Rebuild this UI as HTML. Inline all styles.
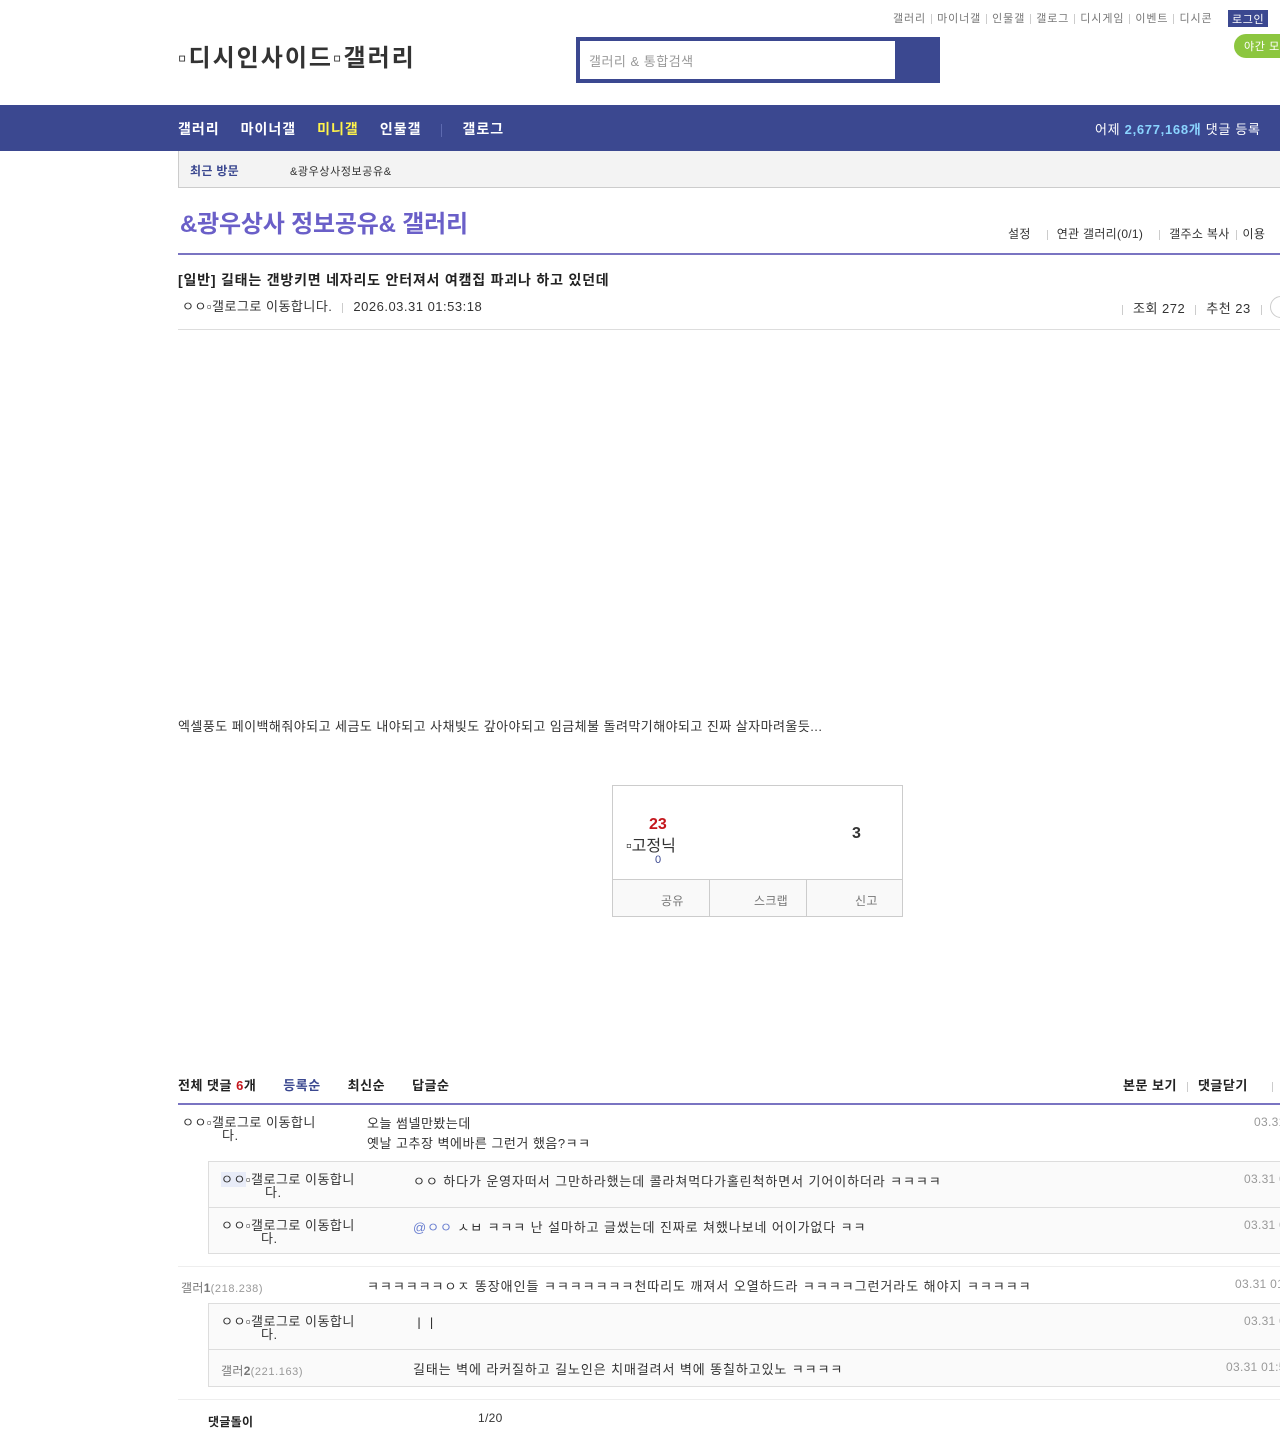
<!DOCTYPE html>
<html><head><meta charset="utf-8"><style>
*{margin:0;padding:0;box-sizing:border-box}
body{width:1280px;height:1428px;overflow:hidden;background:#fff;font-family:"Liberation Sans","Noto Sans CJK KR",sans-serif;color:#333;position:relative}
.a{position:absolute;white-space:nowrap}
.s11{font-size:11px;letter-spacing:0.6px}.s12{font-size:12px;letter-spacing:0.3px}.s13{font-size:13px;letter-spacing:0.5px}
.b{font-weight:bold}
.g{color:#777}
.sep{display:inline-block;width:1px;height:10px;background:#ccc;margin:0 5px;vertical-align:middle}
</style></head><body>
<div class="a s11 g" style="top:10px;left:893px;letter-spacing:0.9px">갤러리<span class="sep"></span>마이너갤<span class="sep"></span>인물갤<span class="sep"></span>갤로그<span class="sep"></span>디시게임<span class="sep"></span>이벤트<span class="sep"></span>디시콘</div>
<div class="a s11" style="top:10px;left:1228px;background:#3b4890;color:#fff;padding:1px 4px;height:17px">로그인</div>
<div class="a s11" style="top:34px;left:1234px;background:#8cc63f;color:#fff;padding:4px 10px;border-radius:12px 0 0 12px;width:60px">야간 모드</div>
<div class="a b" style="top:38px;left:178px;font-size:24px;color:#333;letter-spacing:2px">▫디시인사이드▫갤러리</div>
<div class="a" style="top:37px;left:576px;width:364px;height:46px;background:#3b4890"></div>
<div class="a s13" style="top:41px;left:580px;width:315px;height:38px;background:#fff;color:#999;padding:10px 9px">갤러리 &amp; 통합검색</div>
<div class="a" style="top:105px;left:0;width:1280px;height:46px;background:#3b4890"></div>
<div class="a b" style="top:119px;left:178px;font-size:14px;color:#fff;letter-spacing:1px">갤러리<span style="margin-left:21px">마이너갤</span><span style="margin-left:21px;color:#fff34a">미니갤</span><span style="margin-left:21px">인물갤</span><span style="display:inline-block;width:1px;height:13px;background:#5d6ab0;margin:0 20px;vertical-align:middle"></span>갤로그</div>
<div class="a s13" style="top:119px;left:1095px;color:#fff;letter-spacing:0.7px">어제 <b style="color:#8ad4ff">2,677,168개</b> 댓글 등록</div>
<div class="a" style="top:151px;left:178px;width:1102px;height:37px;background:#f3f3f3;border-left:1px solid #ccc;border-bottom:1px solid #ccc"></div>
<div class="a s12 b" style="top:162px;left:190px;color:#3b4890">최근 방문</div>
<div class="a s11" style="top:163px;left:290px;color:#333">&amp;광우상사정보공유&amp;</div>
<div class="a b" style="top:204px;left:180px;font-size:24px;color:#6a5fc8;letter-spacing:-0.2px">&amp;광우상사 정보공유&amp; 갤러리</div>
<div class="a s12" style="top:225px;left:1008px">설정<span class="sep" style="margin:0 9px 0 16px"></span>연관 갤러리(0/1)<span class="sep" style="margin:0 9px 0 16px"></span>갤주소 복사<span class="sep" style="margin:0 6px"></span>이용</div>
<div class="a" style="top:253px;left:178px;width:1102px;height:2px;background:#7a74c2"></div>
<div class="a b" style="top:270px;left:178px;font-size:14px;color:#222;letter-spacing:0.8px">[일반] 길태는 갠방키면 네자리도 안터져서 여캠집 파괴나 하고 있던데</div>
<div class="a s13" style="top:296px;left:182px">ㅇㅇ▫갤로그로 이동합니다.<span class="sep" style="margin:0 10px"></span>2026.03.31 01:53:18</div>
<div class="a s13" style="top:298px;left:1122px"><span class="sep" style="margin:0 10px 0 0"></span>조회 272<span class="sep" style="margin:0 10px"></span>추천 23<span class="sep" style="margin:0 10px"></span></div>
<div class="a" style="top:296px;left:1270px;width:22px;height:22px;border:1px solid #ccc;border-radius:50%"></div>
<div class="a" style="top:329px;left:178px;width:1102px;height:1px;background:#ddd"></div>
<div class="a s13" style="top:716px;left:178px;letter-spacing:0.45px">엑셀풍도 페이백해줘야되고 세금도 내야되고 사채빚도 갚아야되고 임금체불 돌려막기해야되고 진짜 살자마려울듯...</div>
<div class="a" style="top:785px;left:612px;width:291px;height:132px;border:1px solid #ccc"></div>
<div class="a b" style="top:816px;left:649px;font-size:16px;color:#c4161c">23</div>
<div class="a" style="top:832px;left:626px;font-size:16px;color:#333">▫고정닉</div>
<div class="a s11" style="top:854px;left:655px;color:#3b4890">0</div>
<div class="a b" style="top:825px;left:852px;font-size:16px;color:#333">3</div>
<div class="a" style="top:879px;left:613px;width:289px;height:37px;border-top:1px solid #ccc;background:#f9f9f9"></div>
<div class="a" style="top:880px;left:709px;width:1px;height:36px;background:#ccc"></div>
<div class="a" style="top:880px;left:806px;width:1px;height:36px;background:#ccc"></div>
<div class="a s12 g" style="top:892px;left:661px">공유</div>
<div class="a s12 g" style="top:892px;left:754px">스크랩</div>
<div class="a s12 g" style="top:892px;left:855px">신고</div>
<div class="a b s13" style="top:1075px;left:178px;color:#222">전체 댓글 <span style="color:#c4161c">6</span>개<span style="margin-left:27px;color:#3b4890">등록순</span><span style="margin-left:27px">최신순</span><span style="margin-left:27px">답글순</span></div>
<div class="a b s13" style="top:1075px;left:1123px;color:#222">본문 보기<span class="sep" style="margin:0 10px"></span>댓글닫기<span class="sep" style="margin:0 10px 0 24px"></span></div>
<div class="a" style="top:1103px;left:178px;width:1102px;height:2px;background:#7a74c2"></div>
<div class="a s13" style="top:1116px;left:182px;line-height:13px">ㅇㅇ▫갤로그로 이동합니<br><span style="padding-left:40px">다.</span></div>
<div class="a s13" style="top:1114px;left:367px;line-height:20px">오늘 썸넬만봤는데<br>옛날 고추장 벽에바른 그런거 했음?ㅋㅋ</div>
<div class="a s12 g" style="top:1115px;left:1254px;color:#999">03.31</div>
<div class="a" style="top:1161px;left:208px;width:1072px;height:93px;background:#fafafa;border:1px solid #ddd;border-right:none"></div>
<div class="a" style="top:1207px;left:208px;width:1072px;height:1px;background:#ddd"></div>
<div class="a s13" style="top:1173px;left:221px;line-height:13px"><span style="background:#e8ecf8">ㅇㅇ</span>▫갤로그로 이동합니<br><span style="padding-left:44px">다.</span></div>
<div class="a s13" style="top:1171px;left:413px;letter-spacing:0.9px">ㅇㅇ 하다가 운영자떠서 그만하라했는데 콜라쳐먹다가홀린척하면서 기어이하더라 ㅋㅋㅋㅋ</div>
<div class="a s12" style="top:1172px;left:1244px;color:#999">03.31 0</div>
<div class="a s13" style="top:1219px;left:221px;line-height:13px">ㅇㅇ▫갤로그로 이동합니<br><span style="padding-left:40px">다.</span></div>
<div class="a s13" style="top:1217px;left:413px;letter-spacing:0.9px"><span style="color:#6a7fd0">@ㅇㅇ</span> ㅅㅂ ㅋㅋㅋ 난 설마하고 글썼는데 진짜로 쳐했나보네 어이가없다 ㅋㅋ</div>
<div class="a s12" style="top:1218px;left:1244px;color:#999">03.31 0</div>
<div class="a" style="top:1266px;left:178px;width:1102px;height:1px;background:#eee"></div>
<div class="a s12 g" style="top:1279px;left:181px">갤러<b>1</b><span class="s11" style="color:#999">(218.238)</span></div>
<div class="a s13" style="top:1276px;left:367px;letter-spacing:0.95px">ㅋㅋㅋㅋㅋㅋㅇㅈ 똥장애인들 ㅋㅋㅋㅋㅋㅋㅋ천따리도 깨져서 오열하드라 ㅋㅋㅋㅋ그런거라도 해야지 ㅋㅋㅋㅋㅋ</div>
<div class="a s12" style="top:1277px;left:1235px;color:#999">03.31 01</div>
<div class="a" style="top:1303px;left:208px;width:1072px;height:84px;background:#fafafa;border:1px solid #ddd;border-right:none"></div>
<div class="a" style="top:1349px;left:208px;width:1072px;height:1px;background:#ddd"></div>
<div class="a s13" style="top:1315px;left:221px;line-height:13px">ㅇㅇ▫갤로그로 이동합니<br><span style="padding-left:40px">다.</span></div>
<div class="a s13" style="top:1313px;left:413px">ㅣㅣ</div>
<div class="a s12" style="top:1314px;left:1244px;color:#999">03.31 0</div>
<div class="a s12 g" style="top:1362px;left:221px">갤러<b>2</b><span class="s11" style="color:#999">(221.163)</span></div>
<div class="a s13" style="top:1359px;left:413px;letter-spacing:0.9px">길태는 벽에 라커질하고 길노인은 치매걸려서 벽에 똥칠하고있노 ㅋㅋㅋㅋ</div>
<div class="a s12" style="top:1360px;left:1226px;color:#999">03.31 01:5</div>
<div class="a" style="top:1399px;left:178px;width:1102px;height:1px;background:#eee"></div>
<div class="a b s12" style="top:1413px;left:208px;color:#222">댓글돌이</div>
<div class="a s12" style="top:1411px;left:478px">1/20</div>
</body></html>
